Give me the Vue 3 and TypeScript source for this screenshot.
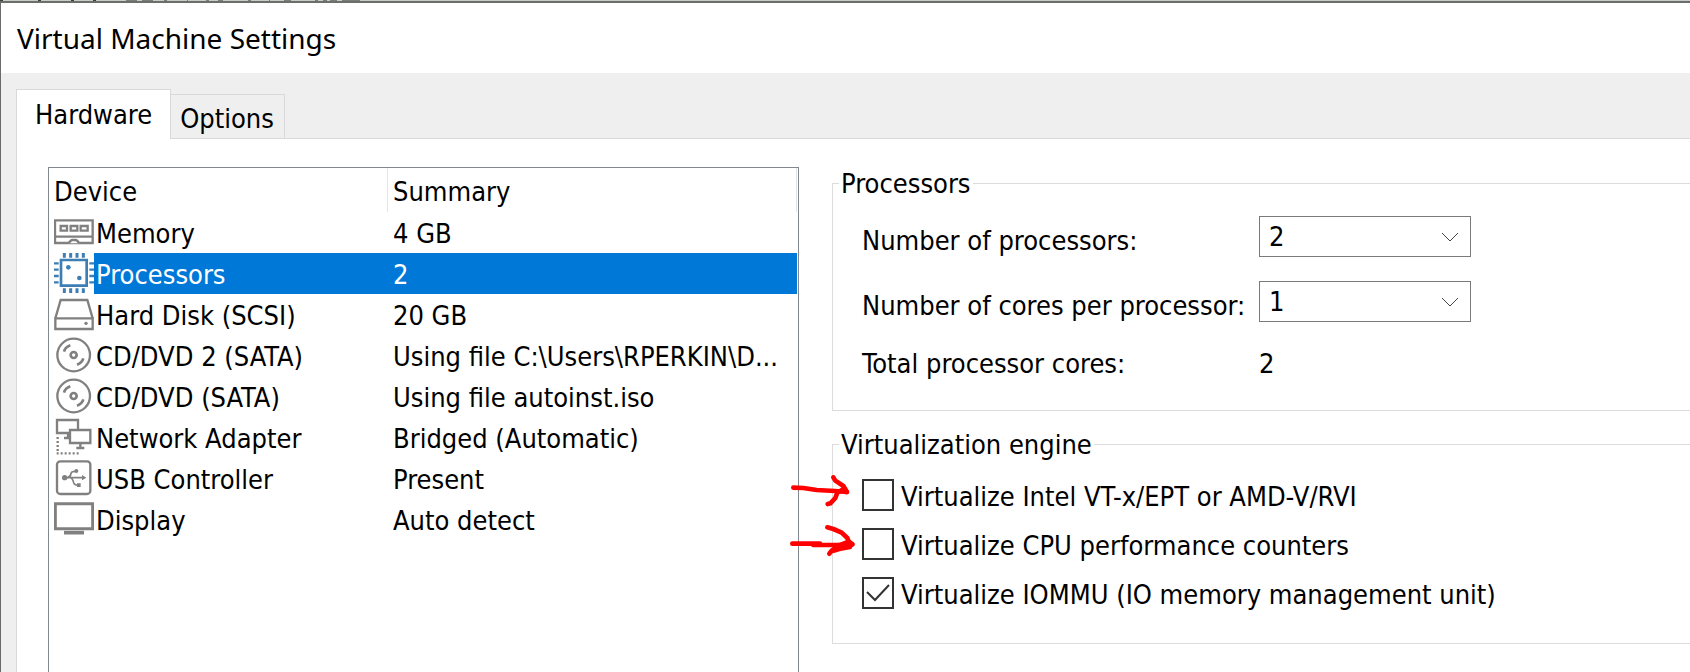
<script setup lang="ts">
import { computed, ref } from 'vue'

type IconName = 'memory' | 'cpu' | 'disk' | 'disc' | 'network' | 'usb' | 'display'

interface Device {
  name: string
  summary: string
  icon: IconName
}

interface EngineOption {
  id: string
  label: string
  checked: boolean
  arrow?: { viewBox: string; paths: string[] }
}

const devices: Device[] = [
  { name: 'Memory', summary: '4 GB', icon: 'memory' },
  { name: 'Processors', summary: '2', icon: 'cpu' },
  { name: 'Hard Disk (SCSI)', summary: '20 GB', icon: 'disk' },
  { name: 'CD/DVD 2 (SATA)', summary: 'Using file C:\\Users\\RPERKIN\\D...', icon: 'disc' },
  { name: 'CD/DVD (SATA)', summary: 'Using file autoinst.iso', icon: 'disc' },
  { name: 'Network Adapter', summary: 'Bridged (Automatic)', icon: 'network' },
  { name: 'USB Controller', summary: 'Present', icon: 'usb' },
  { name: 'Display', summary: 'Auto detect', icon: 'display' },
]

const tabs = ['Hardware', 'Options']
const activeTab = ref('Hardware')
const selected = ref('Processors')
const processors = ref(2)
const cores = ref(1)
const totalCores = computed(() => processors.value * cores.value)

const options = ref<EngineOption[]>([
  {
    id: 'vtx',
    label: 'Virtualize Intel VT-x/EPT or AMD-V/RVI',
    checked: false,
    arrow: {
      viewBox: '30 159 210 111',
      paths: ['M40 203 L70 204 L110 210 L165 213 L200 216', 'M160 172 L166 182 L190 198 L201 216', 'M143 252 L151 250 L166 234 L172 218 L192 206'],
    },
  },
  {
    id: 'counters',
    label: 'Virtualize CPU performance counters',
    checked: false,
    arrow: {
      viewBox: '30 306 210 111',
      paths: ['M37 371 L120 371 L100 375 L170 375 L217 373', 'M142 322 L160 327 L185 338 L202 354 L206 364 L217 373', 'M148 401 L155 392 L175 378 L198 368 M155 394 L185 385 L210 381'],
    },
  },
  { id: 'iommu', label: 'Virtualize IOMMU (IO memory management unit)', checked: true },
])
</script>

<template>
  <div class="screen">
    <svg class="backdrop" aria-hidden="true">
      <path d="M0 0H3M38 0H41M71 0H74M93 0H96" stroke="#3c3f3c" />
      <path d="M126 0H137M142 0H153M164 0H167M187 0H188M206 0H209M218 0H223M248 0H251M269 0H270M284 0H291M315 0H318M323 0H327M330 0H337M342 0H360" stroke="#7a7d7a" />
    </svg>
    <main class="dialog">
      <header class="titlebar">
        <h1>Virtual Machine Settings</h1>
      </header>

      <div class="body">
        <div class="tabs" role="tablist">
          <button
            v-for="tab in tabs"
            :key="tab"
            type="button"
            role="tab"
            class="tab"
            :class="{ active: tab === activeTab }"
            :aria-selected="tab === activeTab"
            @click="activeTab = tab"
          >{{ tab }}</button>
        </div>

        <div class="panel" role="tabpanel">
          <div class="devices">
            <table>
              <thead>
                <tr>
                  <th class="device-col">Device</th>
                  <th>Summary</th>
                </tr>
              </thead>
              <tbody>
                <tr
                  v-for="device in devices"
                  :key="device.name"
                  :class="{ selected: device.name === selected }"
                  @click="selected = device.name"
                >
                  <td class="device-cell">
                    <div class="device">
                      <svg v-if="device.icon === 'memory'" class="icon" viewBox="42 156 120 123">
                        <path d="M45 181H158V249H45Z M45 230H158" />
                        <path d="M62 198H81V212H62Z M92 198H112V212H92Z M122 198H143V212H122Z" />
                        <path d="M86 250Q92 240 97 240H107Q112 240 117 250" fill="#fff" />
                      </svg>
                      <svg v-else-if="device.icon === 'cpu'" class="icon blue" viewBox="42 156 120 123">
                        <path d="M63 177H140V254H63Z" stroke-width="8" />
                        <path d="M73 156v14M92 156v14M111 156v14M130 156v14M73 262v14M92 262v14M111 262v14M130 262v14" stroke-width="9" />
                        <path d="M42 187h14M42 206h14M42 225h14M42 244h14M148 187h14M148 206h14M148 225h14M148 244h14" />
                        <circle class="solid" cx="85" cy="199" r="7" />
                        <circle class="solid" cx="118" cy="231" r="7" />
                      </svg>
                      <svg v-else-if="device.icon === 'disk'" class="icon" viewBox="42 402 120 123">
                        <path d="M46 475L62 420H142L158 475" />
                        <path d="M46 475H158V507H46Z" />
                        <circle class="solid" cx="138" cy="490" r="5" />
                      </svg>
                      <svg v-else-if="device.icon === 'disc'" class="icon" viewBox="42 -15 120 123">
                        <circle cx="101" cy="45" r="49" />
                        <circle cx="101" cy="45" r="9" stroke-width="8" />
                        <path d="M72 35Q76 21 91 16M130 55Q126 69 111 74" stroke-width="8" />
                      </svg>
                      <svg v-else-if="device.icon === 'network'" class="icon" viewBox="42 231 120 123">
                        <path d="M51 240H114V279H51Z M84 279V292M72 294H90" />
                        <path d="M90 270H151V309H90Z" fill="#fff" />
                        <path d="M121 309V323M109 324H133" />
                        <path d="M53 291V337M50 340H118" stroke-dasharray="6 6" />
                      </svg>
                      <svg v-else-if="device.icon === 'usb'" class="icon" viewBox="42 354 120 123">
                        <rect x="51" y="364" width="100" height="98" rx="10" />
                        <path d="M74 413H130M84 412Q92 410 93 400Q94 394 106 394M94 414Q99 419 101 428Q103 436 114 436" stroke-width="5" />
                        <circle class="solid" cx="74" cy="413" r="8" />
                        <circle class="solid" cx="109" cy="393" r="6" />
                        <path class="solid" d="M126 405L139 413L126 421Z M111 430H122V441H111Z" />
                      </svg>
                      <svg v-else class="icon" viewBox="42 477 120 123">
                        <path d="M46 491H158V566H46Z" stroke-width="9" />
                        <path d="M72 578H132" stroke-width="11" />
                      </svg>
                      <span class="name">{{ device.name }}</span>
                    </div>
                  </td>
                  <td>{{ device.summary }}</td>
                </tr>
              </tbody>
            </table>
          </div>

          <div class="settings">
            <fieldset class="processors">
              <legend>Processors</legend>
              <label for="processors">Number of processors:</label>
              <span class="dropdown">
                <select id="processors" v-model="processors">
                  <option v-for="n in [1, 2, 4, 8]" :key="n" :value="n">{{ n }}</option>
                </select>
                <svg class="chevron" viewBox="0 0 18 10"><path d="M1 1L9 9L17 1" /></svg>
              </span>
              <label for="cores">Number of cores per processor:</label>
              <span class="dropdown">
                <select id="cores" v-model="cores">
                  <option v-for="n in [1, 2, 4, 8]" :key="n" :value="n">{{ n }}</option>
                </select>
                <svg class="chevron" viewBox="0 0 18 10"><path d="M1 1L9 9L17 1" /></svg>
              </span>
              <span class="total">Total processor cores:</span>
              <output class="total" for="processors cores">{{ totalCores }}</output>
            </fieldset>

            <fieldset class="engine">
              <legend>Virtualization engine</legend>
              <div v-for="option in options" :key="option.id" class="option">
                <span class="check">
                  <input :id="option.id" v-model="option.checked" type="checkbox" />
                  <svg v-if="option.checked" class="tick" viewBox="0 0 32 32"><path d="M5 15L13 23L27 8" /></svg>
                </span>
                <label :for="option.id">{{ option.label }}</label>
                <svg v-if="option.arrow" class="arrow" :viewBox="option.arrow.viewBox">
                  <path v-for="d in option.arrow.paths" :key="d" :d="d" />
                </svg>
              </div>
            </fieldset>
          </div>
        </div>
      </div>
    </main>
  </div>
</template>

<style>
body {
  margin: 0;
}
</style>

<style scoped>
.screen {
  display: flex;
  flex-direction: column;
  height: 100vh;
  overflow: hidden;
  box-sizing: border-box;
  color: #000;
  background: #fff;
  font: 27px/32px "DejaVu Sans Condensed", "DejaVu Sans", sans-serif;
}

.backdrop {
  flex: none;
  width: 100%;
  height: 1px;
  background: #c9ccc9;
  stroke-width: 2;
}

.dialog {
  flex: 1;
  display: flex;
  flex-direction: column;
  min-height: 0;
  border-top: 2px solid #6b6e6b;
  border-left: 1px solid #6b6b6b;
}

.titlebar {
  flex: none;
  padding: 17px 16px 16px;
  background: #fff;
}

h1 {
  margin: 0;
  font: 400 28px/37px "Noto Sans", sans-serif;
}

.body {
  flex: 1;
  display: flex;
  flex-direction: column;
  min-height: 0;
  padding: 16px 0 0 15px;
  background: #efefef;
}

.tabs {
  flex: none;
  display: flex;
  align-items: flex-end;
}

.tab {
  box-sizing: border-box;
  height: 44px;
  margin: 0 0 0 -1px;
  padding: 5px 10px 0 9px;
  border: 1px solid #d9d9d9;
  border-bottom: 0;
  color: inherit;
  background: #efefef;
  font: inherit;
}

.tab.active {
  z-index: 1;
  height: 50px;
  margin: 0 0 -1px;
  padding: 0 18px;
  background: #fff;
}

.panel {
  flex: 1;
  display: grid;
  grid-template-columns: minmax(0, 751fr) minmax(0, 858fr);
  column-gap: 33px;
  min-height: 0;
  padding: 28px 0 0 31px;
  border-top: 1px solid #d9d9d9;
  border-left: 1px solid #d9d9d9;
  background: #fff;
}

.devices {
  padding-right: 1px;
  border: 1px solid #828790;
  border-bottom: 0;
  overflow: hidden;
}

table {
  width: 100%;
  border-collapse: separate;
  border-spacing: 0;
  table-layout: fixed;
}

th {
  box-sizing: border-box;
  height: 44px;
  padding: 4px 5px 0;
  font-weight: 400;
  text-align: left;
  border-right: 1px solid #e5e5e5;
}

.device-col {
  width: 339px;
}

td {
  box-sizing: border-box;
  height: 41px;
  padding: 2px 0 0 5px;
  overflow: hidden;
  white-space: nowrap;
}

.device-cell {
  padding-top: 0;
}

.device {
  display: flex;
}

.name {
  flex: 1;
  padding: 2px 0 0 2px;
  line-height: 39px;
}

.selected td:last-child,
.selected .name {
  color: #fff;
  background: #0078d7;
}

.icon {
  flex: none;
  width: 40px;
  height: 41px;
  fill: none;
  stroke: #808080;
  stroke-width: 7;
}

.icon .solid {
  fill: #808080;
  stroke: none;
}

.icon.blue {
  stroke: #3d7fb5;
}

.icon.blue .solid {
  fill: #3d7fb5;
}

.settings {
  display: flex;
  flex-direction: column;
  gap: 17px;
}

fieldset {
  min-width: 0;
  margin: 0;
  border: 1px solid #dcdcdc;
  border-right: 0;
  white-space: nowrap;
}

legend {
  margin-left: -23px;
  padding: 2px 2px 0;
  line-height: 30px;
}

.processors {
  display: grid;
  grid-template-columns: 397px 212px;
  row-gap: 24px;
  padding: 17px 0 30px 29px;
}

.processors label {
  padding-top: 9px;
}

.total {
  padding-top: 2px;
}

.dropdown {
  position: relative;
  display: flex;
}

select {
  appearance: none;
  width: 100%;
  height: 41px;
  margin: 0;
  padding: 0 36px 0 9px;
  border: 1px solid #7a7a7a;
  border-radius: 0;
  color: inherit;
  background: #fff;
  font: inherit;
}

.chevron {
  position: absolute;
  top: 16px;
  right: 12px;
  width: 18px;
  height: 10px;
  fill: none;
  stroke: #444;
  stroke-width: 1;
  pointer-events: none;
}

.engine {
  display: flex;
  flex-direction: column;
  gap: 17px;
  padding: 19px 0 34px 29px;
}

.option {
  position: relative;
  display: flex;
  gap: 7px;
}

.option label {
  padding-top: 4px;
  line-height: 28px;
}

.check {
  position: relative;
  display: flex;
}

input {
  appearance: none;
  width: 32px;
  height: 32px;
  margin: 0;
  border: 2px solid #333;
  background: #fff;
}

.tick {
  position: absolute;
  inset: 0;
  fill: none;
  stroke: #333;
  stroke-width: 2;
  pointer-events: none;
}

.arrow {
  position: absolute;
  top: -6px;
  left: -72px;
  width: 70px;
  height: 37px;
  fill: none;
  stroke: #f00;
  stroke-width: 14;
  stroke-linecap: round;
  stroke-linejoin: round;
  pointer-events: none;
}
</style>
